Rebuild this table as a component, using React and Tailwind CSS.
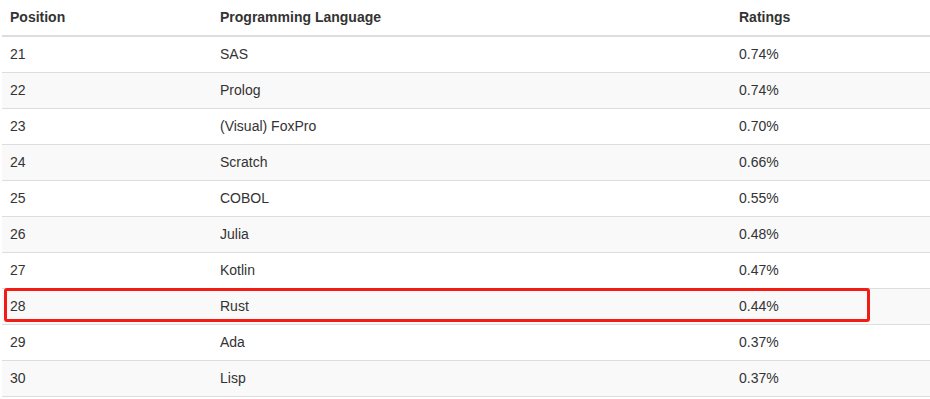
import React from "react";

const rows = [
  ["21", "SAS", "0.74%"],
  ["22", "Prolog", "0.74%"],
  ["23", "(Visual) FoxPro", "0.70%"],
  ["24", "Scratch", "0.66%"],
  ["25", "COBOL", "0.55%"],
  ["26", "Julia", "0.48%"],
  ["27", "Kotlin", "0.47%"],
  ["28", "Rust", "0.44%"],
  ["29", "Ada", "0.37%"],
  ["30", "Lisp", "0.37%"],
];

export default function App() {
  return (
    <div
      className="w-[930px] h-[399px] overflow-hidden bg-white pl-[2px] text-[14px] text-[#333]"
      style={{ fontFamily: '"Liberation Sans", Arial, sans-serif' }}
    >
      <div className="relative w-[928px]">
        <div className="grid grid-cols-[210px_519px_1fr] border-b-2 border-[#ddd] font-bold">
          <div className="px-2 py-2 leading-[19px]">Position</div>
          <div className="px-2 py-2 leading-[19px]">Programming Language</div>
          <div className="px-2 py-2 leading-[19px]">Ratings</div>
        </div>
        {rows.map((r, i) => (
          <div
            key={r[0]}
            className={
              "grid grid-cols-[210px_519px_1fr] border-b border-[#ddd] " +
              (i % 2 === 1 ? "bg-[#f9f9f9]" : "bg-white")
            }
          >
            <div className="px-2 py-2 leading-[19px]">{r[0]}</div>
            <div className="px-2 py-2 leading-[19px]">{r[1]}</div>
            <div className="px-2 py-2 leading-[19px]">{r[2]}</div>
          </div>
        ))}
        <div className="absolute left-[2px] top-[288px] w-[866px] h-[34px] border-[3px] border-[#f21c14] rounded-[3px]" />
      </div>
    </div>
  );
}
